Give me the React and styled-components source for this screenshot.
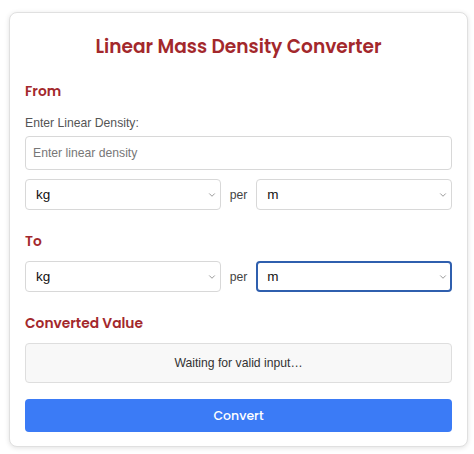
import React from "react";
import styled, { createGlobalStyle } from "styled-components";
import { ChevronDown } from "lucide-react";

const GlobalStyle = createGlobalStyle`
  body {
    margin: 0;
    background: #fff;
    font-family: "Liberation Sans", Arial, sans-serif;
  }
`;

const Page = styled.div`
  padding: 12px 6px 7px 9px;
`;

const Card = styled.div`
  width: 459px;
  box-sizing: border-box;
  padding: 22px 15px 14px;
  background: #fff;
  border: 1px solid #e0e0e0;
  border-radius: 8px;
  box-shadow: 0 1px 5px rgba(0, 0, 0, 0.12);
  display: flex;
  flex-direction: column;
`;

const Title = styled.h1`
  margin: 0 0 24px;
  font-family: Poppins, "Open Sans", sans-serif;
  font-size: 18.6px;
  line-height: 24px;
  font-weight: 600;
  color: #a3282c;
  text-align: center;
`;

const Heading = styled.h3`
  margin: ${(p) => p.$mt || 0}px 0 ${(p) => p.$mb || 0}px;
  font-family: Poppins, "Open Sans", sans-serif;
  font-size: 13.8px;
  line-height: 18px;
  font-weight: 600;
  color: #a3282c;
`;

const Label = styled.label`
  font-size: 12.2px;
  line-height: 15px;
  color: #555;
  margin-bottom: 5px;
`;

const Input = styled.input`
  height: 34px;
  box-sizing: border-box;
  padding: 0 7px;
  border: 1px solid #d8d8d8;
  border-radius: 4px;
  font-family: "Liberation Sans", Arial, sans-serif;
  font-size: 12.2px;
  color: #222;
  outline: none;
  &::placeholder {
    color: #777;
  }
`;

const Row = styled.div`
  display: flex;
  align-items: center;
  gap: 9px;
  margin-top: ${(p) => p.$mt || 0}px;
`;

const SelectWrap = styled.div`
  position: relative;
  flex: 1;
  display: flex;
`;

const Select = styled.select`
  flex: 1;
  height: 31px;
  box-sizing: border-box;
  padding: 0 ${(p) => (p.$focused ? 9 : 10)}px;
  border: ${(p) => (p.$focused ? "2px solid #2f5fae" : "1px solid #d8d8d8")};
  border-radius: 4px;
  background: #fff;
  appearance: none;
  font-family: "Liberation Sans", Arial, sans-serif;
  font-size: 13.5px;
  color: #111;
  outline: none;
`;

const Arrow = styled(ChevronDown)`
  position: absolute;
  right: 4px;
  top: 50%;
  transform: translateY(-50%);
  pointer-events: none;
  color: #777;
`;

const Per = styled.span`
  font-size: 12.2px;
  color: #444;
`;

const Result = styled.div`
  margin-top: 10px;
  height: 40px;
  box-sizing: border-box;
  border: 1px solid #dedede;
  border-radius: 4px;
  background: #f8f8f8;
  display: flex;
  align-items: center;
  justify-content: center;
  font-size: 12.2px;
  color: #333;
`;

const Button = styled.button`
  margin-top: 16px;
  height: 33px;
  border: none;
  border-radius: 4px;
  background: #3b7bf6;
  color: #fff;
  font-family: Poppins, "Open Sans", sans-serif;
  font-size: 12.5px;
  font-weight: 500;
  cursor: pointer;
`;

const units = ["kg", "g", "lb"];
const lengths = ["m", "cm", "ft"];

const UnitSelect = ({ options, value, focused }) => (
  <SelectWrap>
    <Select defaultValue={value} $focused={focused}>
      {options.map((u) => (
        <option key={u}>{u}</option>
      ))}
    </Select>
    <Arrow size={10} strokeWidth={1.8} />
  </SelectWrap>
);

const UnitRow = ({ mt, focused }) => (
  <Row $mt={mt}>
    <UnitSelect options={units} value="kg" />
    <Per>per</Per>
    <UnitSelect options={lengths} value="m" focused={focused} />
  </Row>
);

export default function App() {
  return (
    <>
      <GlobalStyle />
      <Page>
        <Card>
          <Title>Linear Mass Density Converter</Title>
          <Heading $mb={15}>From</Heading>
          <Label>Enter Linear Density:</Label>
          <Input placeholder="Enter linear density" />
          <UnitRow mt={9} />
          <Heading $mt={23} $mb={10}>
            To
          </Heading>
          <UnitRow focused />
          <Heading $mt={23}>Converted Value</Heading>
          <Result>Waiting for valid input…</Result>
          <Button>Convert</Button>
        </Card>
      </Page>
    </>
  );
}
